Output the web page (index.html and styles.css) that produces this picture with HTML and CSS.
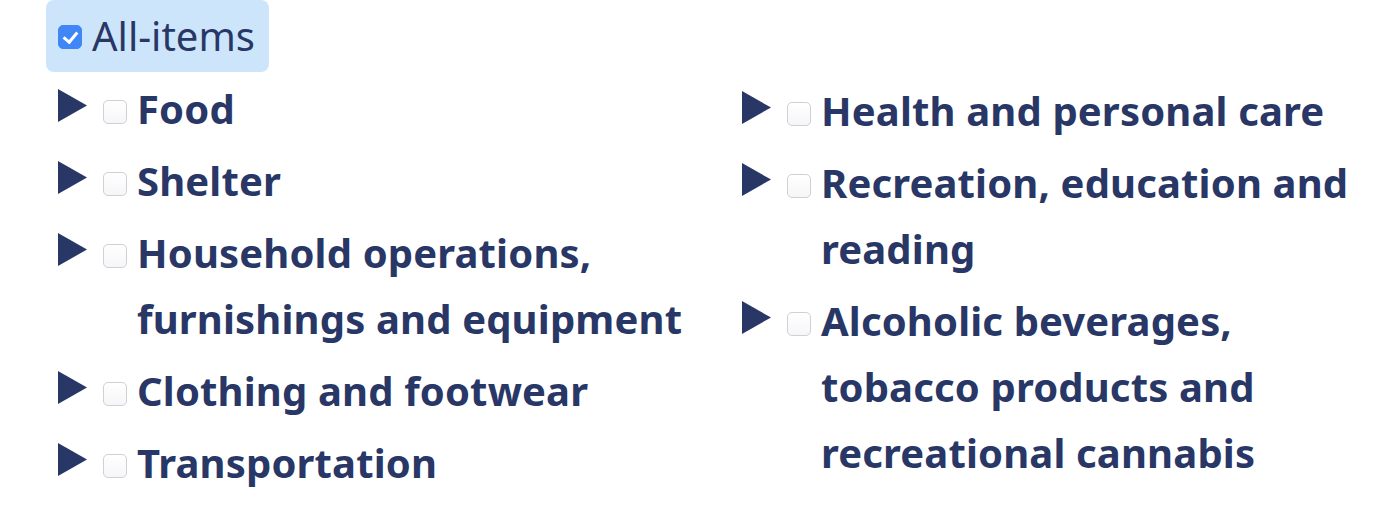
FILE: index.html
```html
<!DOCTYPE html>
<html lang="en">
<head>
<meta charset="utf-8">
<title>Product categories</title>
<link rel="stylesheet" href="styles.css">
</head>
<body>
<div class="tree">
  <label class="root">
    <input type="checkbox" class="box" checked>
    <span class="root-label">All-items</span>
  </label>
  <div class="columns">
    <ul class="col">
      <li class="item">
        <svg class="caret" viewBox="0 0 29 33" aria-hidden="true"><path d="M0 0 L29 16.5 L0 33 Z"/></svg>
        <input type="checkbox" class="box">
        <span class="label">Food</span>
      </li>
      <li class="item">
        <svg class="caret" viewBox="0 0 29 33" aria-hidden="true"><path d="M0 0 L29 16.5 L0 33 Z"/></svg>
        <input type="checkbox" class="box">
        <span class="label">Shelter</span>
      </li>
      <li class="item">
        <svg class="caret" viewBox="0 0 29 33" aria-hidden="true"><path d="M0 0 L29 16.5 L0 33 Z"/></svg>
        <input type="checkbox" class="box">
        <span class="label">Household operations, furnishings and equipment</span>
      </li>
      <li class="item">
        <svg class="caret" viewBox="0 0 29 33" aria-hidden="true"><path d="M0 0 L29 16.5 L0 33 Z"/></svg>
        <input type="checkbox" class="box">
        <span class="label">Clothing and footwear</span>
      </li>
      <li class="item">
        <svg class="caret" viewBox="0 0 29 33" aria-hidden="true"><path d="M0 0 L29 16.5 L0 33 Z"/></svg>
        <input type="checkbox" class="box">
        <span class="label">Transportation</span>
      </li>
    </ul>
    <ul class="col col-right">
      <li class="item">
        <svg class="caret" viewBox="0 0 29 33" aria-hidden="true"><path d="M0 0 L29 16.5 L0 33 Z"/></svg>
        <input type="checkbox" class="box">
        <span class="label">Health and personal care</span>
      </li>
      <li class="item">
        <svg class="caret" viewBox="0 0 29 33" aria-hidden="true"><path d="M0 0 L29 16.5 L0 33 Z"/></svg>
        <input type="checkbox" class="box">
        <span class="label">Recreation, education and reading</span>
      </li>
      <li class="item">
        <svg class="caret" viewBox="0 0 29 33" aria-hidden="true"><path d="M0 0 L29 16.5 L0 33 Z"/></svg>
        <input type="checkbox" class="box">
        <span class="label">Alcoholic beverages, tobacco products and recreational cannabis</span>
      </li>
    </ul>
  </div>
</div>
</body>
</html>
```

FILE: styles.css
```css
html, body {
  margin: 0;
  padding: 0;
  background: #ffffff;
}

body {
  font-family: "Noto Sans", "Open Sans", sans-serif;
  color: #283766;
}

.tree {
  padding: 0 0 0 46px;
}

/* top-level "All-items" toggle */
.root {
  display: inline-flex;
  align-items: center;
  height: 72px;
  padding: 0 14px 0 12px;
  background: #cde5fb;
  border-radius: 8px;
  box-sizing: border-box;
}

.root .box {
  margin: 2px 10px 0 0;
}

.root-label {
  font-size: 40px;
  font-weight: 400;
  line-height: 48px;
}

/* checkboxes */
.box {
  appearance: none;
  -webkit-appearance: none;
  width: 24px;
  height: 24px;
  margin: 0;
  flex: 0 0 auto;
  border: 1px solid #cfd0d6;
  border-radius: 5px;
  background: linear-gradient(#ffffff, #f6f6f8);
  box-sizing: border-box;
  position: relative;
}

.box:checked {
  background: #3f86f6;
  border-color: #3f86f6;
}

.box:checked::after {
  content: "";
  position: absolute;
  left: 7px;
  top: 3px;
  width: 6px;
  height: 11px;
  border: solid #ffffff;
  border-width: 0 3px 3px 0;
  transform: rotate(40deg);
}

/* category columns */
.columns {
  display: grid;
  grid-template-columns: 684px 1fr;
  margin-top: 4px;
  padding-left: 12px;
}

.col {
  list-style: none;
  margin: 0;
  padding: 0;
  display: flex;
  flex-direction: column;
  gap: 6px;
}

.col-right {
  margin-top: 2px;
  padding-right: 20px;
}

.item {
  display: flex;
  align-items: flex-start;
}

.caret {
  width: 29px;
  height: 33px;
  margin-top: 13px;
  flex: 0 0 auto;
  fill: #283766;
}

.item .box {
  margin: 24px 10px 0 16px;
}

.label {
  font-size: 40px;
  font-weight: 700;
  line-height: 66px;
  letter-spacing: 0.15px;
}
```
